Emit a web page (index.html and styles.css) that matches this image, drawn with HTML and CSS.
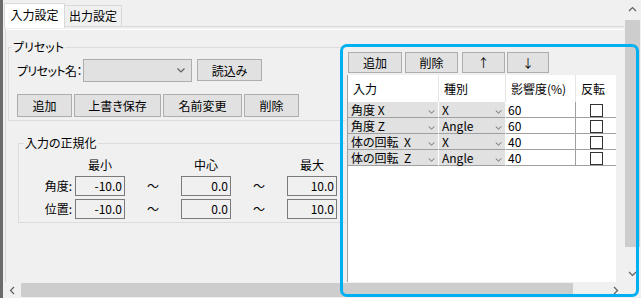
FILE: index.html
```html
<!DOCTYPE html>
<html lang="ja">
<head>
    <meta charset="UTF-8">
    <meta name="viewport" content="width=device-width, initial-scale=1.0">
    <title>入力設定</title>
    <link rel="stylesheet" href="styles.css">
</head>
<body>
    <div class="window">
        <div class="view">
            <div class="client">
                <div class="tabs">
                    <div class="tab active">入力設定</div>
                    <div class="tab">出力設定</div>
                </div>
                <div class="page">
                    <div class="left">
                        <fieldset class="group preset">
                            <legend>プリセット</legend>
                            <div class="preset-row">
                                <span class="preset-label">プリセット名：</span>
                                <div class="combo preset-combo">
                                    <span></span>
                                    <svg class="chev" width="8" height="5" viewBox="0 0 8 5"><path d="M0.5 0.5 L4 4 L7.5 0.5"/></svg>
                                </div>
                                <button class="btn b-load">読込み</button>
                            </div>
                            <div class="button-row">
                                <button class="btn b-add">追加</button>
                                <button class="btn b-save">上書き保存</button>
                                <button class="btn b-rename">名前変更</button>
                                <button class="btn b-del">削除</button>
                            </div>
                        </fieldset>
                        <fieldset class="group norm">
                            <legend>入力の正規化</legend>
                            <div class="norm-grid">
                                <span></span><span class="head">最小</span>
                                <span></span><span class="head">中心</span>
                                <span></span><span class="head">最大</span>

                                <span class="rlabel">角度:</span><span class="num">-10.0</span>
                                <span class="tilde">～</span><span class="num">0.0</span>
                                <span class="tilde">～</span><span class="num">10.0</span>

                                <span class="rlabel">位置:</span><span class="num">-10.0</span>
                                <span class="tilde">～</span><span class="num">0.0</span>
                                <span class="tilde">～</span><span class="num">10.0</span>
                            </div>
                        </fieldset>
                    </div>
                    <div class="panel">
                        <div class="toolbar">
                            <button class="btn t-add">追加</button>
                            <button class="btn t-del">削除</button>
                            <button class="btn t-up">↑</button>
                            <button class="btn t-down">↓</button>
                        </div>
                        <div class="grid">
                            <table>
                                <colgroup>
                                    <col class="c-input">
                                    <col class="c-kind">
                                    <col class="c-rate">
                                    <col class="c-flip">
                                </colgroup>
                                <tr class="head-row">
                                    <th>入力</th>
                                    <th>種別</th>
                                    <th>影響度(%)</th>
                                    <th>反転</th>
                                </tr>
                                <tr>
                                    <td class="cell-combo"><div class="combo cc"><span>角度 X</span><svg class="chev" width="8" height="5" viewBox="0 0 8 5"><path d="M0.5 0.5 L4 4 L7.5 0.5"/></svg></div></td>
                                    <td class="cell-combo"><div class="combo cc"><span>X</span><svg class="chev" width="8" height="5" viewBox="0 0 8 5"><path d="M0.5 0.5 L4 4 L7.5 0.5"/></svg></div></td>
                                    <td class="rate">60</td>
                                    <td class="flip"><div class="check"></div></td>
                                </tr>
                                <tr>
                                    <td class="cell-combo"><div class="combo cc"><span>角度 Z</span><svg class="chev" width="8" height="5" viewBox="0 0 8 5"><path d="M0.5 0.5 L4 4 L7.5 0.5"/></svg></div></td>
                                    <td class="cell-combo"><div class="combo cc"><span>Angle</span><svg class="chev" width="8" height="5" viewBox="0 0 8 5"><path d="M0.5 0.5 L4 4 L7.5 0.5"/></svg></div></td>
                                    <td class="rate">60</td>
                                    <td class="flip"><div class="check"></div></td>
                                </tr>
                                <tr>
                                    <td class="cell-combo"><div class="combo cc"><span>体の回転  X</span><svg class="chev" width="8" height="5" viewBox="0 0 8 5"><path d="M0.5 0.5 L4 4 L7.5 0.5"/></svg></div></td>
                                    <td class="cell-combo"><div class="combo cc"><span>X</span><svg class="chev" width="8" height="5" viewBox="0 0 8 5"><path d="M0.5 0.5 L4 4 L7.5 0.5"/></svg></div></td>
                                    <td class="rate">40</td>
                                    <td class="flip"><div class="check"></div></td>
                                </tr>
                                <tr>
                                    <td class="cell-combo"><div class="combo cc"><span>体の回転  Z</span><svg class="chev" width="8" height="5" viewBox="0 0 8 5"><path d="M0.5 0.5 L4 4 L7.5 0.5"/></svg></div></td>
                                    <td class="cell-combo"><div class="combo cc"><span>Angle</span><svg class="chev" width="8" height="5" viewBox="0 0 8 5"><path d="M0.5 0.5 L4 4 L7.5 0.5"/></svg></div></td>
                                    <td class="rate">40</td>
                                    <td class="flip"><div class="check"></div></td>
                                </tr>
                            </table>
                        </div>
                    </div>
                </div>
            </div>
            <div class="vscroll">
                <div class="sarrow"><svg width="9" height="6" viewBox="0 0 9 6"><path d="M1 5 L4.5 1.5 L8 5"/></svg></div>
                <div class="vtrack"><div class="vthumb"></div></div>
                <div class="sarrow"><svg width="9" height="6" viewBox="0 0 9 6"><path d="M1 1 L4.5 4.5 L8 1"/></svg></div>
            </div>
        </div>
        <div class="hscroll">
            <div class="harrow left-arrow"><svg width="6" height="9" viewBox="0 0 6 9"><path d="M5 1 L1.5 4.5 L5 8"/></svg></div>
            <div class="htrack"><div class="hthumb"></div></div>
            <div class="harrow right-arrow"><svg width="6" height="9" viewBox="0 0 6 9"><path d="M1 1 L4.5 4.5 L1 8"/></svg></div>
            <div class="corner"></div>
        </div>
        <div class="highlight"></div>
    </div>
</body>
</html>
```

FILE: styles.css
```css
body{
    margin: 0;
    background: #f0f0f0;
    font-family: "Noto Sans CJK JP", sans-serif;
    font-size: 12px;
    font-feature-settings: "palt";
    color: #000;
}
.window{
    width: 641px;
    height: 298px;
    box-sizing: border-box;
    border-left: 3px solid #6b6b6b;
    position: relative;
    display: flex;
    flex-direction: column;
}
.view{
    display: flex;
    height: 282px;
}
.client{
    width: 621px;
    display: flex;
    flex-direction: column;
    overflow: hidden;
}

/* tabs */
.tabs{
    height: 26px;
    display: flex;
    align-items: flex-end;
    padding-left: 1px;
}
.tab{
    box-sizing: border-box;
    height: 21px;
    width: 57px;
    border: 1px solid #d9d9d9;
    border-bottom: 0;
    text-align: center;
    line-height: 20px;
    white-space: nowrap;
}
.tab.active{
    height: 25px;
    width: 61px;
    margin-bottom: -2px;
    background: #fff;
    line-height: 22px;
    position: relative;
    z-index: 1;
}
.tab.active + .tab{
    border-left: 0;
}
.page{
    flex: 1;
    display: flex;
    margin-left: 2px;
    border-top: 1px solid #d9d9d9;
    border-left: 1px solid #d9d9d9;
    box-shadow: inset 0 2px 0 #f0f0f0, inset 0 3px 0 #fff;
    overflow: hidden;
}

/* left side */
.left{
    width: 339px;
    flex-shrink: 0;
    padding: 13px 0 0 2px;
    box-sizing: border-box;
    overflow: hidden;
}
.group{
    margin: 0;
    border: 1px solid #dcdcdc;
    box-sizing: border-box;
    width: 420px;
}
.group legend{
    padding: 0 1px;
    line-height: 14px;
}
.preset{
    padding: 0 0 3px 8px;
}
.preset legend{
    margin-left: -5px;
}
.preset-row{
    display: flex;
    align-items: center;
    height: 24px;
    margin-top: 4px;
}
.preset-label{
    width: 66px;
    flex-shrink: 0;
    white-space: nowrap;
    letter-spacing: -0.6px;
}
.preset-combo{
    width: 109px;
    height: 23px;
    flex-shrink: 0;
    box-sizing: border-box;
    border: 1px solid #adadad;
    padding: 0 6px 0 4px;
    align-items: center;
}
.button-row{
    display: flex;
    gap: 2px;
    margin-top: 12px;
}
.btn{
    box-sizing: border-box;
    height: 23px;
    padding: 0;
    border: 1px solid #adadad;
    background: #e1e1e1;
    font: inherit;
    color: #000;
    white-space: nowrap;
    flex-shrink: 0;
}
.b-load{
    width: 65px;
    height: 22px;
    margin-left: 5px;
}
.b-add, .b-del{
    width: 55px;
}
.b-save{
    width: 87px;
}
.b-rename{
    width: 79px;
}
.norm{
    margin: 15px 0 0 10px;
    padding: 0 0 3px 0;
}
.norm legend{
    margin-left: 5px;
}
.norm-grid{
    display: grid;
    grid-template-columns: 56px 50px 56px 50px 56px 50px;
    grid-template-rows: 16px 20px 20px;
    row-gap: 3px;
    margin-top: 7px;
}
.head{
    text-align: center;
    line-height: 16px;
}
.rlabel{
    text-align: right;
    padding-right: 3px;
    line-height: 20px;
}
.num{
    box-sizing: border-box;
    border: 1px solid #7a7a7a;
    text-align: right;
    padding-right: 2px;
    line-height: 18px;
}
.tilde{
    text-align: center;
    line-height: 20px;
}

/* combo shared */
.combo{
    display: flex;
    justify-content: space-between;
    background: #e1e1e1;
}
.chev{
    flex-shrink: 0;
}
.chev path, .sarrow path, .harrow path{
    fill: none;
    stroke: #606060;
    stroke-width: 1.2;
}

/* right panel */
.panel{
    flex: 1;
    margin-top: 21px;
    padding: 4px 0 0 2px;
    display: flex;
    flex-direction: column;
}
.toolbar{
    display: flex;
    height: 21px;
    margin-bottom: 2px;
}
.toolbar .btn{
    height: 21px;
}
.t-add{
    width: 54px;
    margin-left: 1px;
}
.t-del{
    width: 53px;
    margin-left: 3px;
}
.t-up{
    width: 43px;
    margin-left: 4px;
}
.t-down{
    width: 42px;
    margin-left: 2px;
}
.grid{
    flex: 1;
    width: 269px;
    box-sizing: border-box;
    border-left: 1px solid #a0a0a0;
    background: #fff;
}
.grid table{
    border-collapse: separate;
    border-spacing: 0;
    table-layout: fixed;
    width: 268px;
}
.c-input{ width: 91px; }
.c-kind{ width: 67px; }
.c-rate{ width: 70px; }
.c-flip{ width: 40px; }
.head-row th{
    height: 27px;
    padding: 0 0 0 5px;
    font-weight: normal;
    text-align: left;
    white-space: nowrap;
    border-right: 1px solid #e5e5e5;
    box-sizing: border-box;
}
.head-row th:last-child{
    border-right: 0;
}
.grid td{
    height: 16px;
    padding: 0;
    box-sizing: border-box;
    border-bottom: 1px solid #a0a0a0;
    border-right: 1px solid #fff;
}
.cc{
    height: 15px;
    padding: 0 3px 0 3px;
    box-sizing: border-box;
    line-height: 15px;
    white-space: pre;
}
.cc .chev{
    margin-top: 8px;
    width: 7px;
    height: 4px;
}
.grid td.rate{
    padding-left: 2px;
    line-height: 15px;
    border-right-color: #a0a0a0;
}
.grid td.flip{
    border-right: 0;
}
.check{
    width: 13px;
    height: 13px;
    box-sizing: border-box;
    border: 1px solid #333;
    background: #fff;
    margin: 1px auto 0;
}

/* scrollbars */
.vscroll{
    width: 17px;
    display: flex;
    flex-direction: column;
}
.sarrow{
    height: 17px;
    display: flex;
    align-items: center;
    justify-content: center;
}
.vtrack{
    flex: 1;
    padding: 3px 1px 0;
}
.vthumb{
    height: 227px;
    background: #cdcdcd;
}
.hscroll{
    height: 16px;
    display: flex;
}
.harrow{
    display: flex;
    align-items: center;
    justify-content: center;
}
.left-arrow{
    width: 18px;
}
.right-arrow{
    width: 17px;
}
.htrack{
    width: 586px;
    padding: 1px 0;
    box-sizing: border-box;
}
.hthumb{
    width: 552px;
    height: 14px;
    background: #cdcdcd;
}
.corner{
    flex: 1;
}

/* annotation frame */
.highlight{
    position: absolute;
    left: 337px;
    top: 44px;
    width: 299px;
    height: 253px;
    box-sizing: border-box;
    border: 3px solid #00b0f0;
    border-radius: 7px;
}
```
